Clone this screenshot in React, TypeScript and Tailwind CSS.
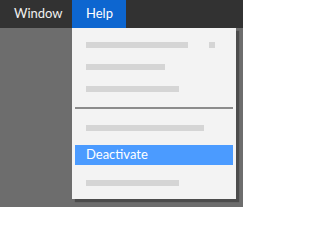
import React from 'react';

const Bar = ({ w }: { w: number }) => (
  <div className="h-[6px] bg-[#d5d5d5]" style={{ width: w }} />
);

const App: React.FC = () => {
  return (
    <div className="w-[243px] h-[207px] bg-[#6d6d6d] overflow-hidden font-['Lato',sans-serif] text-[13px]">
      {/* Menubar */}
      <div className="flex h-[28px] bg-[#323232] text-[#f0f0f0]">
        <div className="w-[72px] pl-[14px] flex items-center">Window</div>
        <div className="w-[54px] pl-[14px] flex items-center bg-[#0d66d0] text-white">Help</div>
      </div>

      {/* Help menu */}
      <div className="ml-[72px] w-[164px] bg-[#f3f3f3] px-[3px] pt-[7px] pb-[6px] shadow-[3px_3px_1px_rgba(0,0,0,0.3)]">
        <div className="flex flex-col gap-[2px]">
          <div className="h-[20px] pl-[11px] flex items-center">
            <Bar w={102} />
            <div className="ml-[21px] w-[6px] h-[6px] bg-[#d5d5d5]" />
          </div>
          <div className="h-[20px] pl-[11px] flex items-center">
            <Bar w={79} />
          </div>
          <div className="h-[20px] pl-[11px] flex items-center">
            <Bar w={93} />
          </div>
        </div>

        <div className="mt-[8px] h-[2px] bg-[#8c8c8c]" />

        <div className="mt-[9px] h-[20px] pl-[11px] flex items-center">
          <Bar w={118} />
        </div>
        <div className="mt-[7px] h-[20px] pl-[11px] flex items-center bg-[#4b9bff] text-white">
          Deactivate
        </div>
        <div className="mt-[8px] h-[20px] pl-[11px] flex items-center">
          <Bar w={93} />
        </div>
      </div>
    </div>
  );
};

export default App;
